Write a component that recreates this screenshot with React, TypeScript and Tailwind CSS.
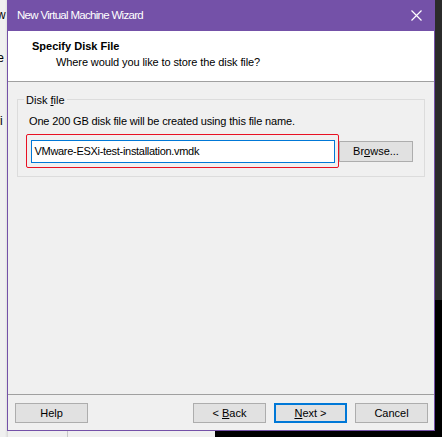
import React from "react";

const font = { fontFamily: '"Liberation Sans", Arial, sans-serif' };

function Btn({ children, primary }: { children: React.ReactNode; primary?: boolean }) {
  return (
    <div
      className={
        "w-[73px] h-[20px] flex items-center justify-center text-[11px] text-black bg-[#e1e1e1] " +
        (primary ? "border-2 border-[#0078d7]" : "border border-[#adadad]")
      }
    >
      {children}
    </div>
  );
}

export default function App() {
  return (
    <div className="relative w-[442px] h-[437px] overflow-hidden bg-[#f0f0f0]" style={font}>
      {/* background desktop pieces */}
      <div className="absolute left-0 top-0 w-[8px] h-[437px] bg-[#f0f0f0] text-[12px] text-black leading-none">
        <div className="absolute left-[-3px] top-[9px]">w</div>
        <div className="absolute left-[-6px] top-[52px]">te</div>
        <div className="absolute left-[-6px] top-[115px]">vi</div>
        <div className="absolute right-0 top-0 w-[3px] h-full bg-gradient-to-r from-transparent to-[#d8d8d8]" />
      </div>
      <div className="absolute left-[67px] top-[431px] w-px h-[6px] bg-[#c8c8c8]" />
      <div className="absolute left-[215px] top-[431px] right-0 bottom-0 bg-black" />
      <div className="absolute left-[435px] top-0 w-[7px] h-[300px] bg-[#2b2b2b]" />
      <div className="absolute left-[435px] top-[300px] w-[7px] h-[137px] bg-black" />

      {/* dialog */}
      <div className="absolute left-[7px] top-0 w-[428px] h-[431px] flex flex-col bg-[#f0f0f0] border-x border-b border-[#7451a8]">
        <div className="h-[31px] -mx-px bg-[#7451a8] flex items-center pl-[10px] pr-[13px] text-white text-[11.5px] tracking-[-0.7px]">
          <span className="flex-1">New Virtual Machine Wizard</span>
          <svg width="11" height="11" viewBox="0 0 11 11" className="mt-[-1px]">
            <path d="M0.5 0.5 L10.5 10.5 M10.5 0.5 L0.5 10.5" stroke="white" strokeWidth="1.2" />
          </svg>
        </div>
        <div className="h-[51px] bg-white border-b border-[#a0a0a0] pl-[24px] pt-[7px] text-[11px] text-black">
          <div className="font-bold leading-[16px]">Specify Disk File</div>
          <div className="pl-[24px] leading-[16px] tracking-[-0.1px]">Where would you like to store the disk file?</div>
        </div>
        <div className="flex-1 px-[9px] pt-[17px]">
          <div className="relative border border-[#dcdcdc] h-[78px] px-[8px] pt-[13px]">
            <div className="absolute left-[6px] top-[-8px] bg-[#f0f0f0] px-[2px] text-[11px] leading-[16px] text-black">
              Disk <span className="underline">f</span>ile
            </div>
            <div className="text-[11px] leading-[16px] text-black pl-[3px] tracking-[-0.15px]">
              One 200 GB disk file will be created using this file name.
            </div>
            <div className="flex items-center mt-[5px]">
              <div className="w-[313px] h-[34px] border border-[#e81123] rounded-[2px] flex items-center justify-center">
                <div className="w-[304px] h-[23px] border border-[#0078d7] bg-white flex items-center pl-[3px] text-[11px] text-black tracking-[-0.3px]">
                  VMware-ESXi-test-installation.vmdk
                </div>
              </div>
              <div className="w-[74px] h-[21px] border border-[#adadad] bg-[#e1e1e1] flex items-center justify-center text-[11px] text-black">
                Br<span className="underline">o</span>wse...
              </div>
            </div>
          </div>
        </div>
        <div className="h-[36px] border-t border-[#a0a0a0] flex items-start pt-[8px] pl-[7px] pr-[6px]">
          <Btn>Help</Btn>
          <div className="flex-1" />
          <div className="flex gap-[8px]">
            <Btn>
              &lt;&nbsp;<span className="underline">B</span>ack
            </Btn>
            <Btn primary>
              <span className="underline">N</span>ext&nbsp;&gt;
            </Btn>
            <Btn>Cancel</Btn>
          </div>
        </div>
      </div>
    </div>
  );
}
